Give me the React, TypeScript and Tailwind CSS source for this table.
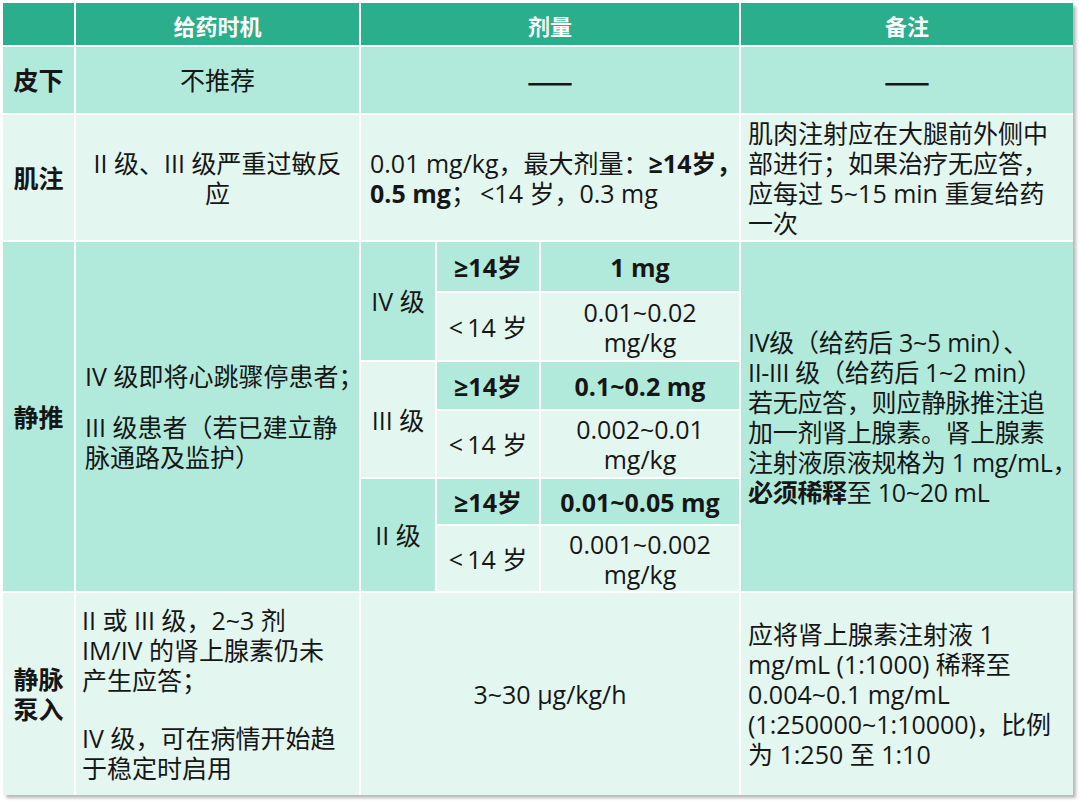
const MED = 'bg-[#b1eadb]';
const LIGHT = 'bg-[#e3f6f0]';
const HEAD = 'bg-[#2aae8b]';

function Cell({ className = '', children }: { className?: string; children?: React.ReactNode }) {
  return <div className={`flex items-center ${className}`}>{children}</div>;
}

function Dash() {
  return <span className="text-[27px] font-bold leading-none [font-family:'Noto_Sans_CJK_SC',sans-serif]">——</span>;
}

export default function App() {
  return (
    <div className="min-h-[802px] w-[1080px] bg-white pl-[3px] pt-[3px] text-[#161616] [font-family:'Open_Sans','Noto_Sans_CJK_SC',sans-serif]">
      <div className="grid w-[1070px] grid-cols-[71px_283px_74px_102px_198px_332px] grid-rows-[42px_66px_125px_49px_67px_47px_66px_45px_65px_202px] gap-[2px] bg-white text-[25px] leading-[30px] shadow-[3px_3px_3px_rgba(0,0,0,0.28)]">
        {/* header */}
        <Cell className={`col-start-1 row-start-1 ${HEAD}`} />
        <Cell className={`col-start-2 row-start-1 justify-center pt-[3px] text-[22px] font-bold text-white ${HEAD}`}>给药时机</Cell>
        <Cell className={`col-start-3 col-span-3 row-start-1 justify-center pt-[3px] text-[22px] font-bold text-white ${HEAD}`}>剂量</Cell>
        <Cell className={`col-start-6 row-start-1 justify-center pt-[3px] text-[22px] font-bold text-white ${HEAD}`}>备注</Cell>

        {/* 皮下 */}
        <Cell className={`col-start-1 row-start-2 justify-center font-bold ${MED}`}>皮下</Cell>
        <Cell className={`col-start-2 row-start-2 justify-center ${MED}`}>不推荐</Cell>
        <Cell className={`col-start-3 col-span-3 row-start-2 justify-center ${MED}`}>
          <Dash />
        </Cell>
        <Cell className={`col-start-6 row-start-2 justify-center ${MED}`}>
          <Dash />
        </Cell>

        {/* 肌注 */}
        <Cell className={`col-start-1 row-start-3 justify-center font-bold ${LIGHT}`}>肌注</Cell>
        <Cell className={`col-start-2 row-start-3 justify-center text-center ${LIGHT}`}>
          <p>II 级、III 级严重过敏反<br />应</p>
        </Cell>
        <Cell className={`col-start-3 col-span-3 row-start-3 pl-[9px] whitespace-nowrap ${LIGHT}`}>
          <p>
            0.01 mg/kg，最大剂量：<b>≥14岁，</b>
            <br />
            <b>0.5 mg</b>；&thinsp;&lt;14 岁，0.3 mg
          </p>
        </Cell>
        <Cell className={`col-start-6 row-start-3 pl-[7px] whitespace-nowrap ${LIGHT}`}>
          <p>
            肌肉注射应在大腿前外侧中<br />
            部进行；如果治疗无应答，<br />
            应每过 5~15 min 重复给药<br />
            一次
          </p>
        </Cell>

        {/* 静推 */}
        <Cell className={`col-start-1 row-start-4 row-span-6 justify-center font-bold ${MED}`}>静推</Cell>
        <Cell className={`col-start-2 row-start-4 row-span-6 pl-[9px] whitespace-nowrap ${MED}`}>
          <div>
            <p>IV 级即将心跳骤停患者；</p>
            <p className="mt-[21px]">III 级患者（若已建立静<br />脉通路及监护）</p>
          </div>
        </Cell>

        <Cell className={`col-start-3 row-start-4 row-span-2 justify-center ${MED}`}>IV 级</Cell>
        <Cell className={`col-start-4 row-start-4 justify-center font-bold ${MED}`}>≥14岁</Cell>
        <Cell className={`col-start-5 row-start-4 justify-center font-bold ${MED}`}>1 mg</Cell>
        <Cell className={`col-start-4 row-start-5 justify-center ${LIGHT}`}>&lt;&thinsp;14 岁</Cell>
        <Cell className={`col-start-5 row-start-5 justify-center text-center ${LIGHT}`}>
          <p>0.01~0.02<br />mg/kg</p>
        </Cell>

        <Cell className={`col-start-3 row-start-6 row-span-2 justify-center ${LIGHT}`}>III 级</Cell>
        <Cell className={`col-start-4 row-start-6 justify-center font-bold ${MED}`}>≥14岁</Cell>
        <Cell className={`col-start-5 row-start-6 justify-center font-bold ${MED}`}>0.1~0.2 mg</Cell>
        <Cell className={`col-start-4 row-start-7 justify-center ${LIGHT}`}>&lt;&thinsp;14 岁</Cell>
        <Cell className={`col-start-5 row-start-7 justify-center text-center ${LIGHT}`}>
          <p>0.002~0.01<br />mg/kg</p>
        </Cell>

        <Cell className={`col-start-3 row-start-8 row-span-2 justify-center ${MED}`}>II 级</Cell>
        <Cell className={`col-start-4 row-start-8 justify-center font-bold ${MED}`}>≥14岁</Cell>
        <Cell className={`col-start-5 row-start-8 justify-center font-bold ${MED}`}>0.01~0.05 mg</Cell>
        <Cell className={`col-start-4 row-start-9 justify-center ${LIGHT}`}>&lt;&thinsp;14 岁</Cell>
        <Cell className={`col-start-5 row-start-9 justify-center text-center ${LIGHT}`}>
          <p>0.001~0.002<br />mg/kg</p>
        </Cell>

        <Cell className={`col-start-6 row-start-4 row-span-6 pl-[7px] whitespace-nowrap tracking-[-0.3px] ${MED}`}>
          <p>
            IV级（给药后 3~5 min）、<br />
            II-III 级（给药后 1~2 min）<br />
            若无应答，则应静脉推注追<br />
            加一剂肾上腺素。肾上腺素<br />
            注射液原液规格为 1 mg/mL，<br />
            <b>必须稀释</b>至 10~20 mL
          </p>
        </Cell>

        {/* 静脉泵入 */}
        <Cell className={`col-start-1 row-start-10 justify-center text-center font-bold ${LIGHT}`}>
          <p>静脉<br />泵入</p>
        </Cell>
        <Cell className={`col-start-2 row-start-10 pl-[6px] whitespace-nowrap ${LIGHT}`}>
          <div>
            <p>II 或 III 级，2~3 剂<br />IM/IV 的肾上腺素仍未<br />产生应答；</p>
            <p className="mt-[28px]">IV 级，可在病情开始趋<br />于稳定时启用</p>
          </div>
        </Cell>
        <Cell className={`col-start-3 col-span-3 row-start-10 justify-center ${LIGHT}`}>3~30 μg/kg/h</Cell>
        <Cell className={`col-start-6 row-start-10 pl-[7px] whitespace-nowrap ${LIGHT}`}>
          <p>
            应将肾上腺素注射液 1<br />
            mg/mL (1:1000) 稀释至<br />
            0.004~0.1 mg/mL<br />
            (1:250000~1:10000)，比例<br />
            为 1:250 至 1:10
          </p>
        </Cell>
      </div>
    </div>
  );
}
